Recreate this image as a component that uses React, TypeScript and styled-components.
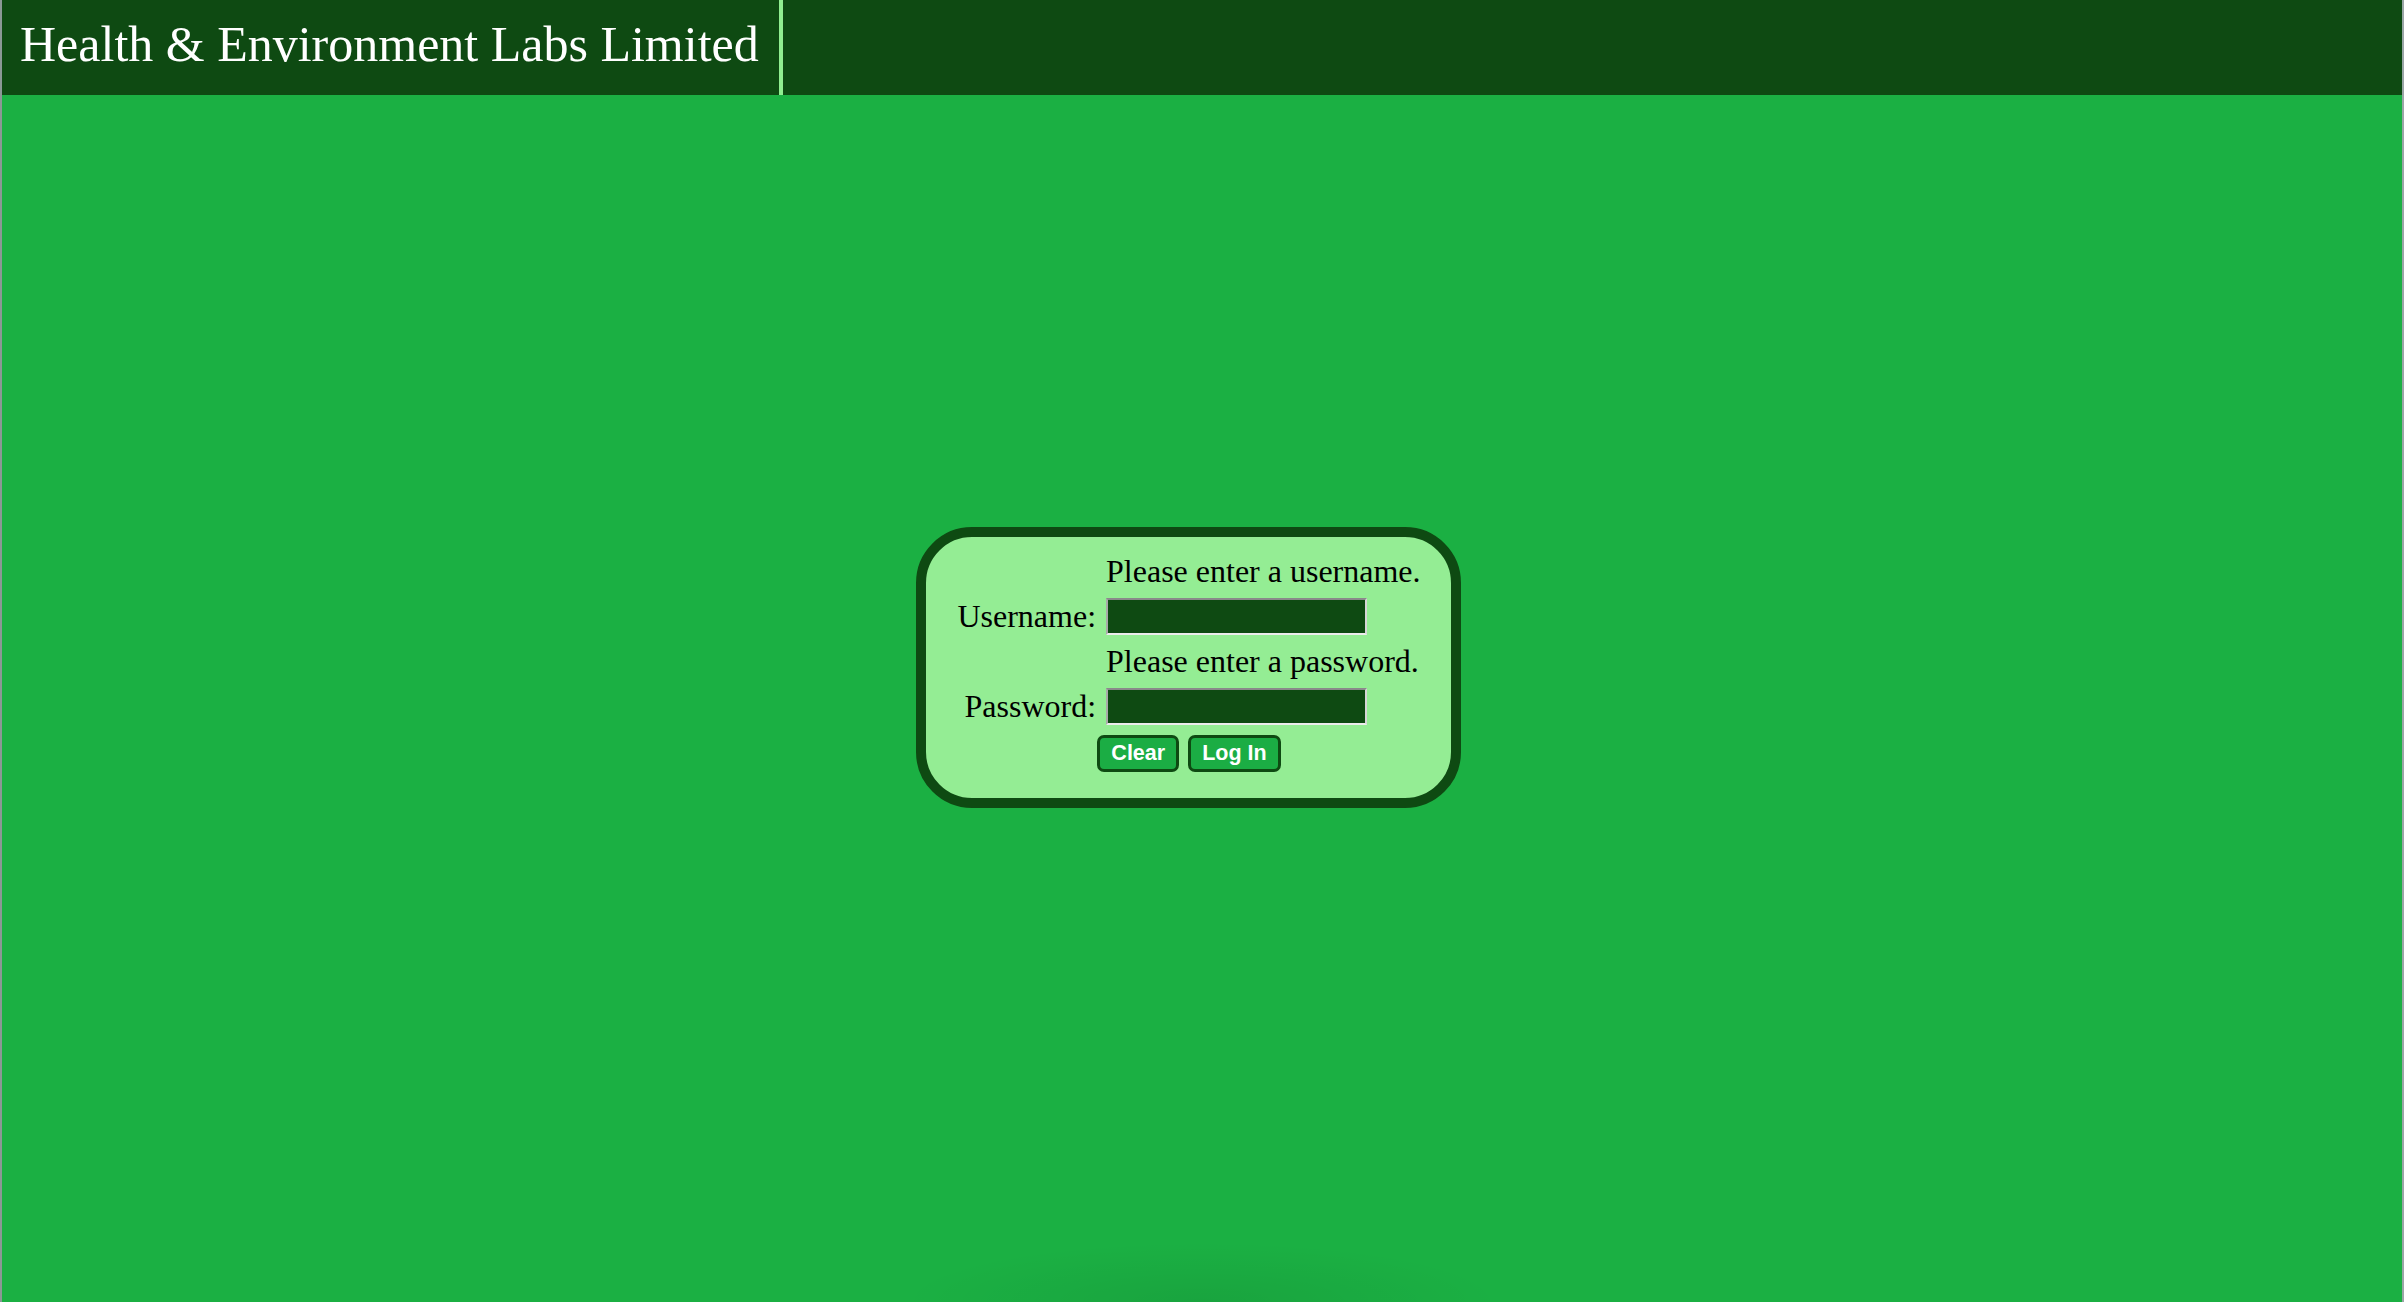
import React from "react";
import styled, { createGlobalStyle } from "styled-components";

const GlobalStyle = createGlobalStyle`
  html, body {
    margin: 0;
    padding: 0;
    background: #1bb043;
  }
  body {
    font-family: "Liberation Serif", "Times New Roman", serif;
  }
  * { box-sizing: border-box; }
`;

const Page = styled.div`
  min-height: 100vh;
  display: flex;
  flex-direction: column;
  background: #1bb043;
  border-left: 2px solid #8b9896;
  border-right: 2px solid #9aa6a6;
`;

const Header = styled.header`
  height: 95px;
  display: flex;
  background: #0e4a12;
`;

const Title = styled.h1`
  margin: 0;
  padding: 16px 20px 0 18px;
  border-right: 4px solid #90ee90;
  font-family: "Liberation Serif", "Times New Roman", serif;
  font-size: 50px;
  font-weight: normal;
  line-height: 1.15;
  color: #ffffff;
  white-space: nowrap;
`;

const Main = styled.main`
  flex: 1;
  display: flex;
  justify-content: center;
  align-items: flex-start;
  padding: 432px 27px 0 0;
  background: radial-gradient(
    ellipse 300px 60px at 50% 100%,
    rgba(0, 0, 0, 0.07),
    rgba(0, 0, 0, 0) 100%
  );
`;

const LoginBox = styled.form`
  display: grid;
  grid-template-columns: auto auto;
  column-gap: 10px;
  row-gap: 8px;
  align-items: center;
  padding: 16px 30px 26px 31px;
  background: #94ed94;
  border: 10px solid #0e4a12;
  border-radius: 56px;
  font-family: "Liberation Serif", "Times New Roman", serif;
  font-size: 32px;
  line-height: 37px;
  color: #000;
`;

const Hint = styled.div`
  grid-column: 2;
  white-space: nowrap;
`;

const Label = styled.label`
  grid-column: 1;
  text-align: right;
  white-space: nowrap;
`;

const Field = styled.input`
  grid-column: 2;
  width: 261px;
  height: 37px;
  margin: 0;
  padding: 0 4px;
  background: #0e4a12;
  color: #ffffff;
  font-size: 20px;
  border-style: solid;
  border-width: 2px;
  border-color: #8a8a8a #d6d6d6 #ececec #a9a9a9;
  outline: none;
`;

const ButtonRow = styled.div`
  grid-column: 1 / -1;
  display: flex;
  justify-content: center;
  gap: 9px;
  margin-top: 2px;
`;

const Button = styled.button`
  height: 37px;
  padding: 0 11px;
  background: #1bad44;
  border: 3px solid #0e4a12;
  border-radius: 7px;
  color: #ffffff;
  font-family: "Liberation Sans", Arial, sans-serif;
  font-size: 21.5px;
  font-weight: bold;
  line-height: 1;
  cursor: pointer;
`;

export default function App() {
  return (
    <>
      <GlobalStyle />
      <Page>
        <Header>
          <Title>Health &amp; Environment Labs Limited</Title>
        </Header>
        <Main>
          <LoginBox onSubmit={(e) => e.preventDefault()}>
            <Hint>Please enter a username.</Hint>
            <Label htmlFor="username">Username:</Label>
            <Field id="username" type="text" />
            <Hint>Please enter a password.</Hint>
            <Label htmlFor="password">Password:</Label>
            <Field id="password" type="password" />
            <ButtonRow>
              <Button type="reset">Clear</Button>
              <Button type="submit">Log In</Button>
            </ButtonRow>
          </LoginBox>
        </Main>
      </Page>
    </>
  );
}
